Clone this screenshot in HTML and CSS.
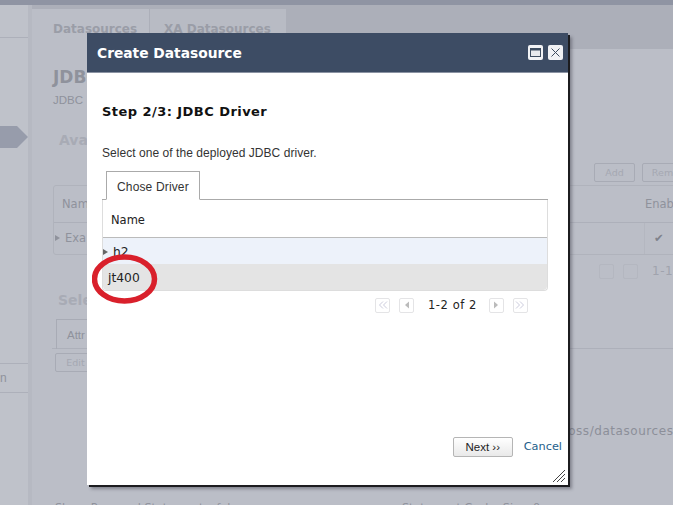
FILE: index.html
```html
<!DOCTYPE html>
<html lang="en">
<head>
<meta charset="utf-8">
<title>Create Datasource</title>
<link rel="stylesheet" href="styles.css">
</head>
<body>
<div class="topbar"></div>
<div class="shell">
  <aside class="side">
    <div class="side-line"></div>
    <div class="side-arrow"></div>
    <div class="side-item">n</div>
  </aside>
  <main class="main">
    <div class="tabs">
      <div class="tab tab-on">Datasources</div>
      <div class="tab tab-off">XA Datasources</div>
    </div>
    <div class="content">
      <h1 class="title">JDBC</h1>
      <p class="sub">JDBC</p>
      <h2 class="avail">Ava</h2>
      <div class="actions"><span class="bgbtn">Add</span><span class="bgbtn">Rem</span></div>
      <div class="bgtable">
        <div class="bghead"><span>Nam</span><span class="enab">Enab</span></div>
        <div class="bgrow"><span><i class="bgarrow"></i>Exa</span><span class="check">✔</span></div>
      </div>
      <div class="bgpager"><i class="bgpg"></i><i class="bgpg"></i><span class="bgpg-text">1-1</span></div>
      <h2 class="sel">Sele</h2>
      <div class="subtab"><span class="subtab-label">Attr</span></div>
      <span class="bgbtn edit">Edit</span>
      <div class="pathline">boss/datasources</div>
      <div class="bottomline"><span class="bottom-a">Share Prepared Statements: false</span><span>Statement Cache Size: 0</span></div>
    </div>
  </main>
</div>

<section class="modal">
  <header class="modal-head">
    <span class="modal-title">Create Datasource</span>
    <span class="win-btns">
      <span class="win-btn"><svg width="15" height="15" viewBox="0 0 15 15"><rect x="2.500" y="3.500" width="10" height="8" fill="#e8eaee" stroke="#3d4c60"/><rect x="2.500" y="3.500" width="10" height="2" fill="#3d4c60"/></svg></span>
      <span class="win-btn"><svg width="15" height="15" viewBox="0 0 15 15"><path d="M3.500 3.500l8 8M11.500 3.500l-8 8" stroke="#3d4c60" stroke-width="1" fill="none"/></svg></span>
    </span>
  </header>
  <div class="modal-body">
    <h3 class="step">Step 2/3: JDBC Driver</h3>
    <p class="hint">Select one of the deployed JDBC driver.</p>
    <div class="dtabs"><span class="dtab">Chose Driver</span></div>
    <div class="grid">
      <div class="grid-head">Name</div>
      <div class="grid-row row-a"><i class="row-arrow"></i>h2</div>
      <div class="grid-row row-b">jt400</div>
    </div>
    <div class="pager">
      <span class="pg"><svg width="10" height="10" viewBox="0 0 10 10"><path d="M5 1.500L1.500 5 5 8.500M9 1.500L5.500 5 9 8.500" fill="none" stroke="#ccd"/></svg></span>
      <span class="pg pg-gap"><svg width="10" height="10" viewBox="0 0 10 10"><path d="M7 1.500L3 5l4 3.500z" fill="#bbb"/></svg></span>
      <span class="pg-text">1-2 of 2</span>
      <span class="pg"><svg width="10" height="10" viewBox="0 0 10 10"><path d="M3 1.500L7 5l-4 3.500z" fill="#bbb"/></svg></span>
      <span class="pg pg-gap"><svg width="10" height="10" viewBox="0 0 10 10"><path d="M1 1.500L4.500 5 1 8.500M5 1.500L8.500 5 5 8.500" fill="none" stroke="#ccd"/></svg></span>
    </div>
    <div class="foot">
      <button class="next" type="button">Next ››</button>
      <a class="cancel" href="#">Cancel</a>
    </div>
    <svg class="grip" width="14" height="14" viewBox="0 0 14 14"><path d="M1 13L13 1M5 13l8-8M9 13l4-4" stroke="#444" stroke-width="1" fill="none"/></svg>
  </div>
</section>
<svg class="ring" width="68" height="52" viewBox="0 0 68 52"><ellipse cx="32.500" cy="26" rx="30" ry="22" fill="none" stroke="#d9202b" stroke-width="5.500"/></svg>
</body>
</html>
```
FILE: styles.css
```css
* { box-sizing: border-box; }
html, body { margin: 0; height: 100%; }
body {
  width: 673px; height: 505px; overflow: hidden; position: relative;
  background: #bbbec7; color: #8f929c;
  font-family: "Liberation Sans", Arial, sans-serif; font-size: 12px;
}
.topbar { height: 5px; background: #8f94a3; }
.shell { display: flex; height: 500px; }
.side {
  width: 32px; flex: none; background: #bfc2ca;
  border-right: 4px solid #b6b9c2; padding-top: 32px;
}
.side-line { height: 1px; background: #adb0ba; }
.side-arrow {
  width: 28px; height: 22px; margin-top: 88px; background: #979cab;
  clip-path: polygon(0 0, 17px 0, 28px 50%, 17px 100%, 0 100%);
}
.side-item {
  margin-top: 215px; height: 30px; line-height: 28px; color: #8f929c;
  border-top: 1px solid #adb0ba; border-bottom: 1px solid #adb0ba;
}
.main { flex: 1; min-width: 0; }
.tabs {
  height: 44px; background: #acafb9; display: flex; padding-top: 4px;
  font-family: "DejaVu Sans", sans-serif; font-size: 12px; font-weight: bold;
}
.tab { height: 40px; padding-top: 13px; background: #bbbec7; color: #9a9da7; white-space: nowrap; }
.tab-on { width: 118px; padding-left: 21px; border-right: 1px solid #acafb9; }
.tab-off { width: 136px; padding-left: 14px; background: #b8bbc4; }
.content { position: relative; padding: 17px 0 0 21px; height: 456px; }
.title { margin: 0; font: bold 17px/22px "DejaVu Sans", sans-serif; color: #8f929c; }
.sub { margin: 4px 0 0; font-size: 11.500px; line-height: 16px; }
.avail { margin: 22px 0 0 6px; font: bold 14px/20px "DejaVu Sans", sans-serif; color: #a8abb5; }
.actions { display: flex; gap: 7px; margin: 13px 0 0 541px; width: 200px; height: 19px; }
.bgbtn { display: block; width: 41px; height: 19px; text-align: center; border: 1px solid #a8abb5; border-radius: 2px; font: 9.500px/17px "DejaVu Sans", sans-serif; color: #a5a8b2; flex: none; }
.bgtable { width: 641px; margin-top: 3px; border: 1px solid #b0b3bc; border-radius: 3px; }
.bghead, .bgrow { display: flex; justify-content: space-between; font-family: "DejaVu Sans", sans-serif; font-size: 11.500px; }
.bghead { height: 37px; line-height: 36px; padding-left: 8px; border-bottom: 1px solid #adb0ba; }
.bgrow { height: 31px; line-height: 30px; }
.enab { width: 48px; }
.check { padding-left: 9px; color: #7f828c; box-shadow: -1px 0 0 #b4b7c0; margin-right: -12px; width: 60px; }
.bgarrow { display: inline-block; border-left: 5px solid #8f929c; border-top: 3px solid transparent; border-bottom: 3px solid transparent; margin: 0 5px 1px 1px; }
.bgpager { display: flex; gap: 9px; align-items: center; height: 18px; margin: 7px 0 0 546px; width: 100px; font-family: "DejaVu Sans", sans-serif; font-size: 12px; color: #a0a3ad; }
.bgpg { width: 15px; height: 15px; border: 1px solid #b4b7c0; border-radius: 2px; flex: none; }
.bgpg-text { margin-left: 5px; letter-spacing: .5px; }
.sel { margin: 10px 0 0 5px; font: bold 14px/20px "DejaVu Sans", sans-serif; color: #a8abb5; }
.subtab { margin: 9px 0 0 -1px; width: 641px; height: 30px; border-bottom: 1px solid #adb0ba; }
.subtab-label { display: inline-block; height: 30px; width: 70px; margin-left: 4px; padding: 9px 0 0 10px; border: 1px solid #a8abb5; border-bottom: 0; font-size: 11.500px; }
.edit { margin: 4px 0 0 2px; }
.pathline { position: absolute; left: 528px; top: 374px; font: 12px/16px "DejaVu Sans", sans-serif; letter-spacing: .55px; white-space: nowrap; color: #8c8f99; }
.bottomline { position: absolute; left: 23px; top: 452px; display: flex; font: 11.200px/14px "DejaVu Sans", sans-serif; white-space: nowrap; }
.bottom-a { width: 347px; flex: none; }

.modal {
  position: absolute; left: 87px; top: 33px; width: 481px; height: 452px;
  background: #fff; box-shadow: 2px 2px 0 #1c1c1f, 4px 4px 3px rgba(60,60,70,.45);
  display: flex; flex-direction: column;
}
.modal-head {
  height: 40px; flex: none; background: #3d4c64; border-bottom: 1px solid #8b93a3;
  display: flex; align-items: center; justify-content: space-between; padding: 0 5px 0 10px;
}
.modal-title { font: bold 13.800px/20px "DejaVu Sans", sans-serif; color: #fff; }
.win-btns { display: flex; gap: 5px; }
.win-btn { width: 15px; height: 15px; background: #f1f2f5; border-radius: 2px; display: block; }
.win-btn svg { display: block; }
.modal-body { flex: 1; position: relative; padding: 30px 20px 0 15px; display: flex; flex-direction: column; }
.step { margin: 0; font: bold 13px/18px "DejaVu Sans", sans-serif; color: #111; letter-spacing: .45px; }
.hint { margin: 24px 0 0; font-size: 12px; line-height: 16px; color: #333; letter-spacing: .05px; }
.dtabs { margin-top: 10px; height: 29px; padding-left: 4px; border-bottom: 1px solid #aaa; }
.dtab { display: inline-block; height: 29px; width: 94px; padding: 7px 0 0 10px; border: 1px solid #aaa; border-bottom: 1px solid #fff; background: #fff; font-size: 12px; color: #333; line-height: 16px; letter-spacing: .15px; white-space: nowrap; }
.grid { border: 1px solid #ddd; border-top: 0; border-radius: 0 0 4px 4px; height: 91px; width: 446px; }
.grid-head { height: 38px; padding: 3px 0 0 8px; border-bottom: 1px solid #bbb; font: 11.500px/35px "DejaVu Sans", sans-serif; color: #222; }
.grid-row { height: 26px; font: 12.300px/26px "DejaVu Sans", sans-serif; color: #222; padding: 1px 0 0 5px; display: flex; align-items: center; }
.row-a { background: #edf2fa; }
.row-b { background: #e4e4e4; border-radius: 0 0 4px 4px; }
.row-arrow { border-left: 5px solid #666; border-top: 3px solid transparent; border-bottom: 3px solid transparent; margin: 0 5px 0 -5px; flex: none; }
.pager { display: flex; align-items: center; height: 20px; margin-top: 4px; padding-left: 273px; }
.pg { width: 15px; height: 15px; border: 1px solid #e4e4e6; border-radius: 2px; display: flex; align-items: center; justify-content: center; flex: none; }
.pg-gap { margin-left: 9px; }
.pg-text { font: 11.500px/16px "DejaVu Sans", sans-serif; color: #222; margin: 0 12px 0 14px; letter-spacing: .55px; white-space: nowrap; }
.foot { margin-top: auto; margin-bottom: 28px; display: flex; align-items: center; justify-content: flex-end; gap: 11px; margin-right: -14px; }
.next { width: 60px; height: 20px; padding: 0; background: linear-gradient(#fff, #e9e9e9); border: 1px solid #b5b5b5; border-radius: 2px; font: 11.500px/16px "Liberation Sans", sans-serif; color: #222; }
.cancel { font: 11.300px/16px "DejaVu Sans", sans-serif; color: #1f5f8b; text-decoration: none; }
.grip { position: absolute; right: 2px; bottom: 2px; }
.ring { position: absolute; left: 92px; top: 253px; }
```
